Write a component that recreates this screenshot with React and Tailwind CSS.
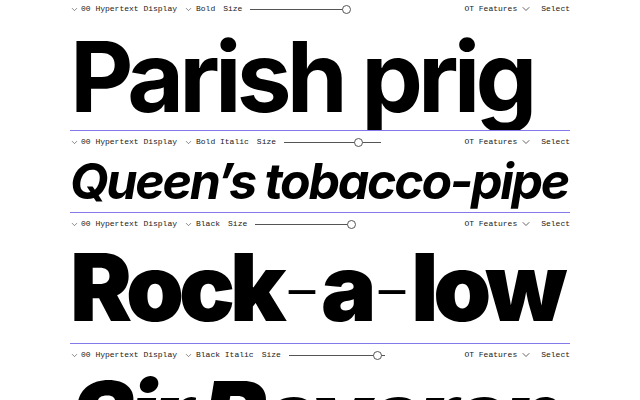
import { ChevronDown } from "lucide-react";

const ROWS = [
  { weight: "Bold", body: "h-[110px]", type: "text-[98px] font-bold not-italic pt-[8px] tracking-[-0.05em]", track: 96, knob: 1 },
  { weight: "Bold Italic", body: "h-[59px]", type: "text-[50px] font-bold italic pt-[3px] tracking-[-0.045em]", track: 97, knob: 0.77 },
  { weight: "Black", body: "h-[108px]", type: "text-[93px] font-black not-italic pt-[6px] tracking-[-0.055em]", track: 100, knob: 0.96 },
  { weight: "Black Italic", body: "h-[60px]", type: "text-[95px] font-black italic pt-[2px] tracking-[-0.05em]", track: 96, knob: 0.92 },
];

const Dash = () => <span className="font-extralight tracking-[-0.02em]">-</span>;

const TEXTS = [
  "Parish prig",
  "Queen’s tobacco-pipe",
  <>Rock<Dash />a<Dash />low</>,
  "Sir Reverence",
];

function Slider({ track, knob }) {
  return (
    <div className="relative h-[9px]" style={{ width: track }}>
      <div className="absolute left-0 right-0 top-[4px] h-px bg-[#555]" />
      <div
        className="absolute top-0 size-[9px] -ml-[4.5px] rounded-full border border-[#555] bg-white"
        style={{ left: track * knob }}
      />
    </div>
  );
}

function Row({ weight, body, type, track, knob, text, last }) {
  return (
    <section>
      <div className="flex h-[22px] items-center text-[8px] text-[#1a1a1a] font-['Liberation_Mono',monospace]">
        <ChevronDown className="size-[9px] text-[#333]" strokeWidth={1.5} />
        <span className="ml-[2px]">00 Hypertext Display</span>
        <ChevronDown className="ml-[7px] size-[9px] text-[#333]" strokeWidth={1.5} />
        <span className="ml-[3px]">{weight}</span>
        <span className="ml-[8px]">Size</span>
        <span className="ml-[8px]"><Slider track={track} knob={knob} /></span>
        <span className="ml-auto">OT Features</span>
        <ChevronDown className="ml-[3px] size-[12px] text-[#333]" strokeWidth={1.5} />
        <span className="ml-[9px]">Select</span>
      </div>
      <div className={`${body} overflow-hidden`}>
        <p className={`${type} leading-none whitespace-nowrap text-black font-['Inter',sans-serif]`}>{text}</p>
      </div>
      {!last && <div className="h-px bg-[#8479ea]" />}
    </section>
  );
}

export default function App() {
  return (
    <div className="h-[400px] w-[640px] overflow-hidden bg-white">
      <div className="mx-[70px] -mt-[2px]">
        {ROWS.map((r, i) => (
          <Row key={r.weight} {...r} text={TEXTS[i]} last={i === ROWS.length - 1} />
        ))}
      </div>
    </div>
  );
}
